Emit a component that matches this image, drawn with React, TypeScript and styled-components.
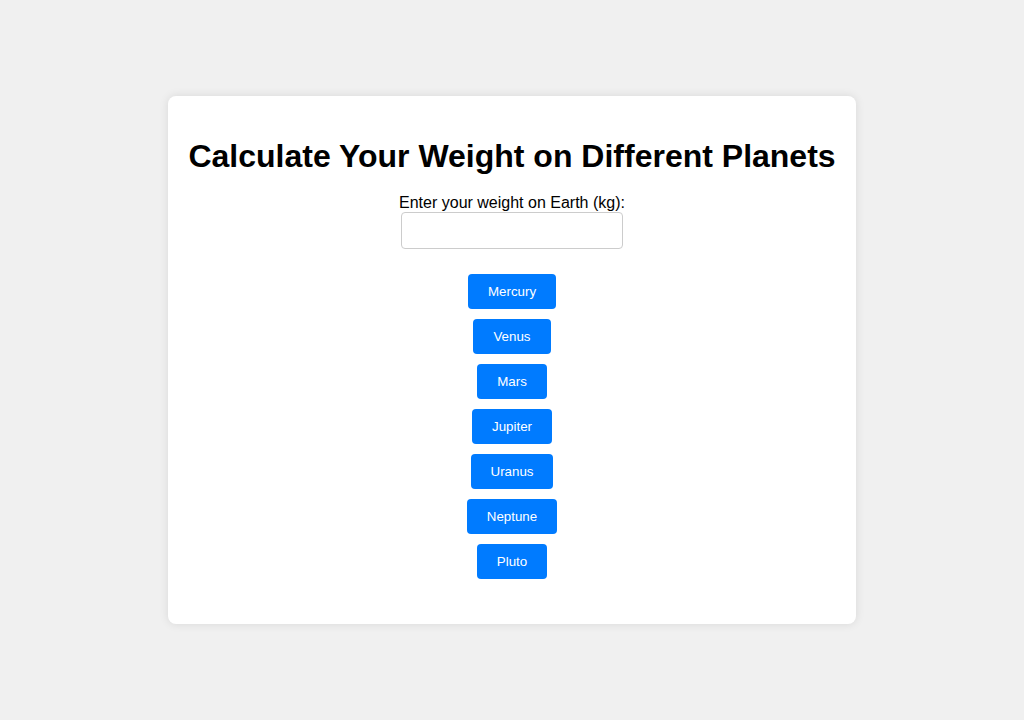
import React from "react";
import styled, { createGlobalStyle } from "styled-components";

const Global = createGlobalStyle`
  html, body { margin: 0; padding: 0; }
  body {
    background: #f0f0f0;
    font-family: "Liberation Sans", Arial, sans-serif;
    color: #000;
  }
`;

const Page = styled.div`
  min-height: 100vh;
  display: flex;
  align-items: center;
  justify-content: center;
`;

const Card = styled.div`
  background: #fff;
  border-radius: 8px;
  box-shadow: 0 0 10px rgba(0, 0, 0, 0.1);
  padding: 20px;
  text-align: center;
  width: fit-content;
`;

const Title = styled.h1`
  font-size: 32px;
  font-weight: bold;
  margin: 21.44px 0 19.2px;
  white-space: nowrap;
`;

const Label = styled.label`
  display: block;
  font-size: 16px;
`;

const Input = styled.input`
  width: 200px;
  padding: 10px;
  border: 1px solid #ccc;
  border-radius: 4px;
  font-family: "Liberation Sans", Arial, sans-serif;
  font-size: 13.333px;
  line-height: normal;
  margin: 0;
  outline: none;
`;

const ButtonList = styled.div`
  display: flex;
  flex-direction: column;
  align-items: center;
  gap: 10px;
  margin: 25px 0 25px;
`;

const PlanetButton = styled.button`
  background: #007bff;
  color: #fff;
  border: none;
  border-radius: 4px;
  padding: 10px 20px;
  font-family: "Liberation Sans", Arial, sans-serif;
  font-size: 13.333px;
  line-height: 15px;
  cursor: pointer;
`;

const planets = ["Mercury", "Venus", "Mars", "Jupiter", "Uranus", "Neptune", "Pluto"];

export default function App() {
  return (
    <>
      <Global />
      <Page>
        <Card>
          <Title>Calculate Your Weight on Different Planets</Title>
          <Label htmlFor="weight">Enter your weight on Earth (kg):</Label>
          <Input id="weight" type="number" />
          <ButtonList>
            {planets.map((p) => (
              <PlanetButton key={p}>{p}</PlanetButton>
            ))}
          </ButtonList>
        </Card>
      </Page>
    </>
  );
}
